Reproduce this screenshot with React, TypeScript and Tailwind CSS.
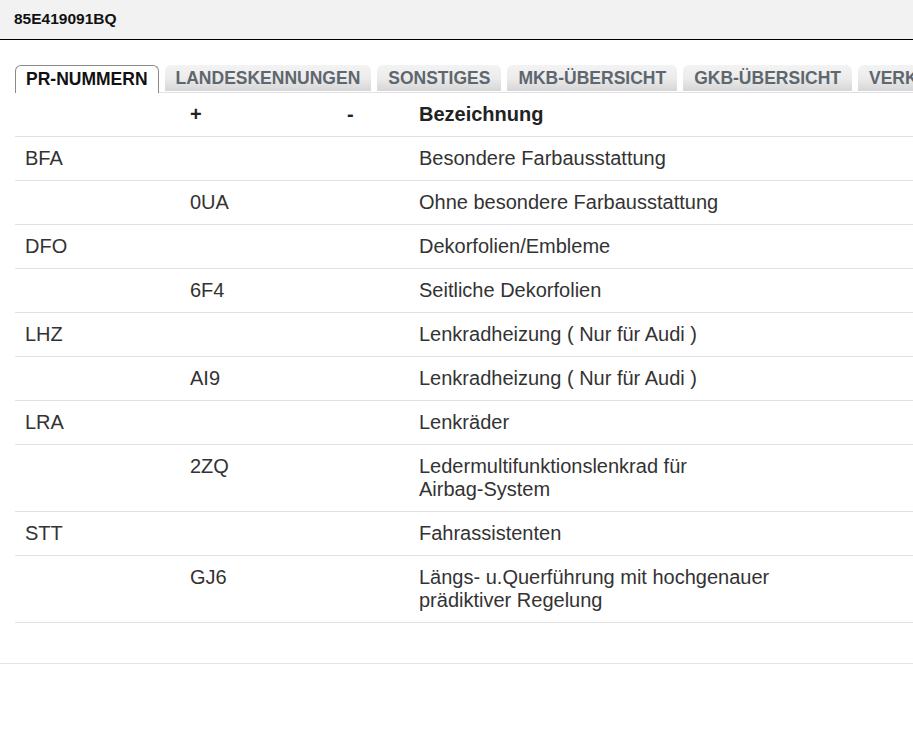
import React from "react";

type Row = { group?: string; plus?: string; minus?: string; text: string };

const tabs = [
  "PR-NUMMERN",
  "LANDESKENNUNGEN",
  "SONSTIGES",
  "MKB-ÜBERSICHT",
  "GKB-ÜBERSICHT",
  "VERKAUFSBEZEICHNUNGEN",
];

const rows: Row[] = [
  { group: "BFA", text: "Besondere Farbausstattung" },
  { plus: "0UA", text: "Ohne besondere Farbausstattung" },
  { group: "DFO", text: "Dekorfolien/Embleme" },
  { plus: "6F4", text: "Seitliche Dekorfolien" },
  { group: "LHZ", text: "Lenkradheizung ( Nur für Audi )" },
  { plus: "AI9", text: "Lenkradheizung ( Nur für Audi )" },
  { group: "LRA", text: "Lenkräder" },
  { plus: "2ZQ", text: "Ledermultifunktionslenkrad für Airbag-System" },
  { group: "STT", text: "Fahrassistenten" },
  { plus: "GJ6", text: "Längs- u.Querführung mit hochgenauer prädiktiver Regelung" },
];

// words never break at their hyphens, only at spaces
const Words = ({ text }: { text: string }) => (
  <>
    {text.split(" ").map((w, i, all) => (
      <React.Fragment key={i}>
        <span className="whitespace-nowrap">{w}</span>
        {i < all.length - 1 ? " " : null}
      </React.Fragment>
    ))}
  </>
);

export default function App() {
  return (
    <div className="min-h-[737px] w-full overflow-hidden bg-white text-[#333] font-['Liberation_Sans',Arial,sans-serif]">
      {/* Title bar */}
      <div className="h-10 bg-[#f2f2f2] border-b border-black px-[14px] flex items-center">
        <span className="text-[15.5px] font-bold text-[#111] leading-none -mt-[2px]">85E419091BQ</span>
      </div>

      {/* Tab content */}
      <div className="border-b border-[#e4e4e8] pb-10">
        <div className="pl-[15px] pt-[25px] w-[1600px]">
          {/* Tabs */}
          <div className="flex items-end gap-[6px] border-b border-[#e0e0e6] whitespace-nowrap">
            {tabs.map((t, i) =>
              i === 0 ? (
                <div
                  key={t}
                  className="h-[28px] px-[10px] flex items-center border border-b-0 border-[#8a8a8a] rounded-t-[6px] bg-white text-[17.5px] font-bold text-[#111] -mb-px"
                >
                  {t}
                </div>
              ) : (
                <div
                  key={t}
                  className="h-[26px] mb-px px-[11px] flex items-center rounded-t-[6px] bg-gradient-to-b from-[#f3f3f3] via-[#ececec] to-[#d6d6d6] text-[17.5px] font-bold text-[#5e666e]"
                >
                  {t}
                </div>
              )
            )}
          </div>

          {/* Table */}
          <table className="w-[1394px] border-collapse text-[20px] leading-[23px] table-fixed">
            <colgroup>
              <col className="w-[165px]" />
              <col className="w-[157px]" />
              <col className="w-[72px]" />
              <col className="w-[400px]" />
              <col className="w-[600px]" />
            </colgroup>
            <thead>
              <tr className="border-b border-[#e0e0e6] text-[#222] font-bold">
                <th className="px-[10px] py-[10px] text-left font-bold"></th>
                <th className="px-[10px] py-[10px] text-left font-bold">+</th>
                <th className="px-[10px] py-[10px] text-left font-bold">-</th>
                <th className="px-[10px] py-[10px] text-left font-bold">Bezeichnung</th>
                <th></th>
              </tr>
            </thead>
            <tbody>
              {rows.map((r, i) => (
                <tr key={i} className="border-b border-[#e0e0e6] align-top">
                  <td className="px-[10px] py-[10px]">{r.group}</td>
                  <td className="px-[10px] py-[10px]">{r.plus}</td>
                  <td className="px-[10px] py-[10px]">{r.minus}</td>
                  <td className="px-[10px] py-[10px]">
                    <Words text={r.text} />
                  </td>
                  <td></td>
                </tr>
              ))}
            </tbody>
          </table>
        </div>
      </div>
    </div>
  );
}
